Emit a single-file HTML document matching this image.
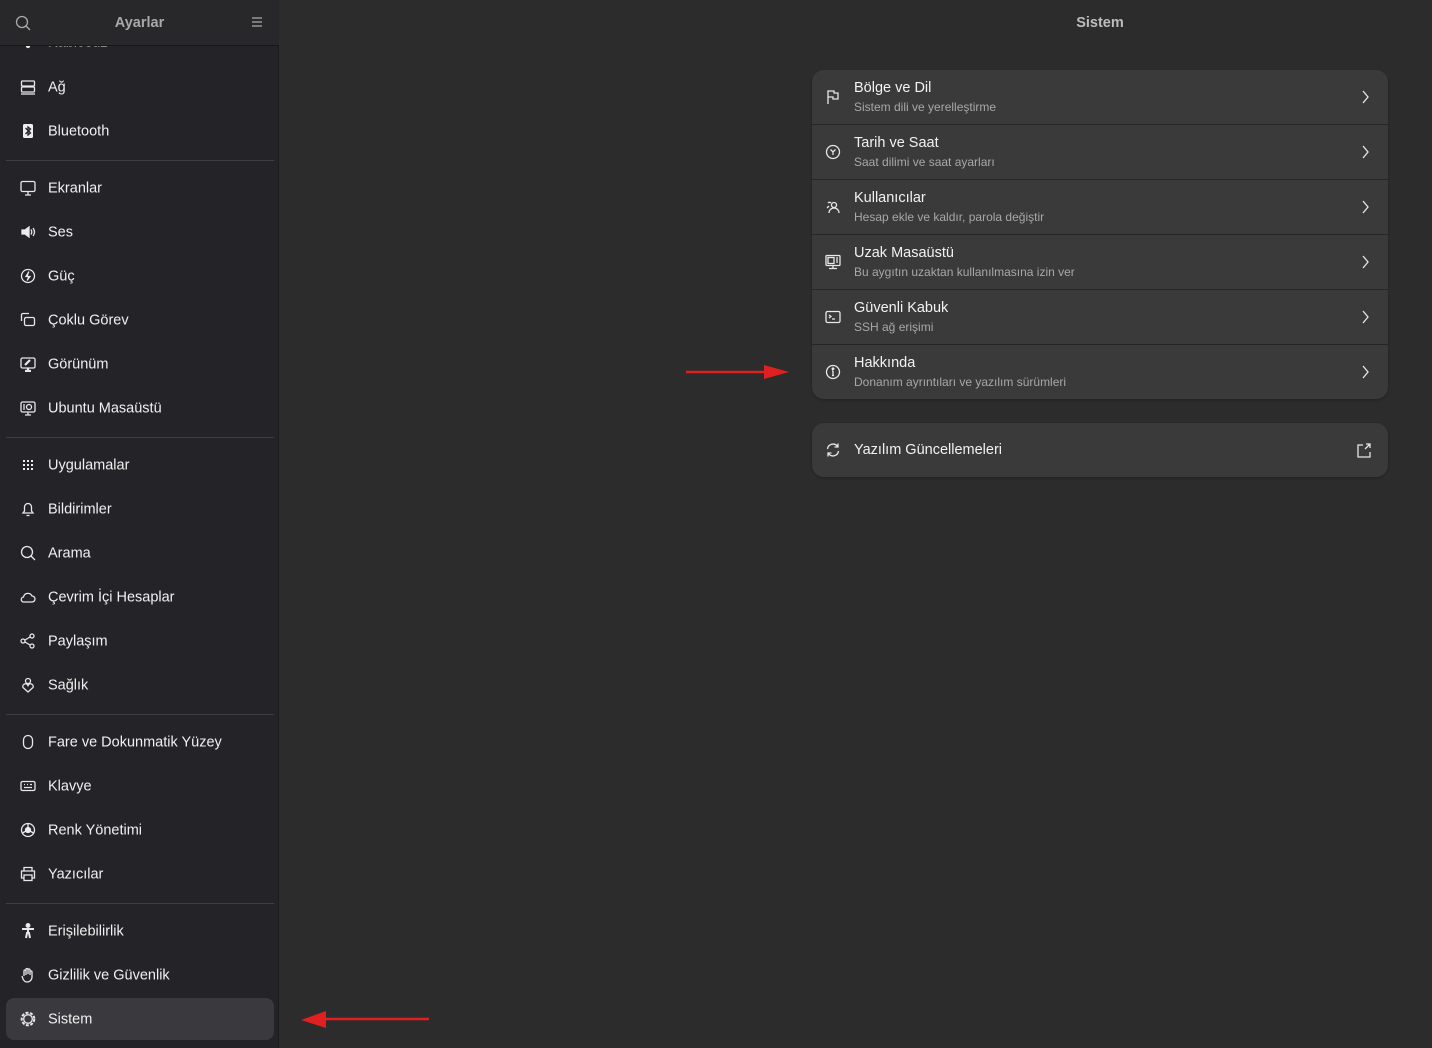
<!DOCTYPE html>
<html><head><meta charset="utf-8"><style>
*{margin:0;padding:0;box-sizing:border-box}
body{width:1432px;height:1048px;background:#2c2c2c;font-family:"Liberation Sans",sans-serif;color:#fff;position:relative;overflow:hidden}
#side{position:absolute;left:0;top:0;width:279px;height:1048px;background:#242428;border-right:1px solid #1b1b1d}
#sh{position:absolute;left:0;top:0;width:279px;height:46px;background:#28282b;border-bottom:1px solid #17171a;z-index:2}
.it{position:absolute;left:6px;width:268px;height:42px;font-size:14.5px;color:#f0f0f0}
.it span{position:absolute;left:42px;top:50%;transform:translateY(-48%)}
.it svg{position:absolute;left:14px;top:13px;width:16px;height:16px}
.sep{position:absolute;left:6px;width:268px;height:1px;background:#3e3e42}
.card{position:absolute;left:812px;width:576px;background:#3a3a3a;border-radius:12px;overflow:hidden;box-shadow:0 1px 2px rgba(0,0,0,.25)}
.row{position:relative;height:55px;border-bottom:1px solid #262626}
.row:last-child{border-bottom:none}
.row .t{position:absolute;left:42px;top:10px;font-size:14.5px;color:#f2f2f2}
.row .s{position:absolute;left:42px;top:30px;font-size:12px;color:#a8a8a8}
.row svg.ic{position:absolute;left:13px;top:19px;width:16px;height:16px}
.row svg.ch{position:absolute;left:549px;top:19px;width:10px;height:16px}
svg{fill:none;stroke:#e8e8e8;stroke-width:1.3}
</style></head><body>
<div id="side">
<div id="sh">
<svg style="position:absolute;left:15px;top:15px;width:16px;height:16px;stroke:#aaa"><circle cx="7" cy="7" r="5.5"/><path d="M11 11l4 4"/></svg>
<div style="position:absolute;left:0;width:279px;top:15px;text-align:center;font-weight:bold;font-size:14.5px;color:#a9a9ab">Ayarlar</div>
<svg style="position:absolute;left:251px;top:16px;width:12px;height:12px;stroke:#aaa"><path d="M1 2h10M1 6h10M1 10h10"/></svg>
</div>
<div class="it" style="top:22px"><svg style="top:16px"><circle cx="8" cy="8" r="1.5" fill="#eee"/></svg><span style="top:20px">Kablosuz</span></div>
<div class="it" style="top:66px"><svg><rect x="1.5" y="2" width="13" height="5" rx="1"/><rect x="1.5" y="8" width="13" height="5" rx="1"/><path d="M1 15h14"/></svg><span>Ağ</span></div>
<div class="it" style="top:110px"><svg><rect x="3" y="1" width="10" height="14" rx="1.5" fill="#eee" stroke="none"/><path d="M5.5 5l5 5-2.5 2V4l2.5 2-5 5" stroke="#242428"/></svg><span>Bluetooth</span></div>
<div class="sep" style="top:160px"></div>
<div class="it" style="top:167px"><svg><rect x="1" y="1.5" width="14" height="10" rx="1.5"/><path d="M5 15h6M8 12v3"/></svg><span>Ekranlar</span></div>
<div class="it" style="top:211px"><svg><path d="M2 6h3l4-3v10l-4-3H2z" fill="#eee"/><path d="M11 5.5q1.5 2.5 0 5M13 4q3 4 0 8"/></svg><span>Ses</span></div>
<div class="it" style="top:255px"><svg><circle cx="8" cy="8" r="6.5"/><path d="M9 3.5L6 8.5h4L7 12.5" fill="#eee"/></svg><span>Güç</span></div>
<div class="it" style="top:299px"><svg><path d="M1.5 9V3a1.5 1.5 0 011.5-1.5h6"/><rect x="4.5" y="5.5" width="10" height="8" rx="1.5"/></svg><span>Çoklu Görev</span></div>
<div class="it" style="top:343px"><svg><rect x="1" y="2" width="14" height="10" rx="1.5"/><path d="M5 15h6M8 12v3M5 9l5-5" stroke-width="2.2"/></svg><span>Görünüm</span></div>
<div class="it" style="top:387px"><svg><rect x="1" y="2" width="14" height="10" rx="1.5"/><circle cx="9" cy="7" r="2.5"/><path d="M3 5h2M3 7h2M3 9h2M5 15h6M8 12v3"/></svg><span>Ubuntu Masaüstü</span></div>
<div class="sep" style="top:437px"></div>
<div class="it" style="top:444px"><svg><g fill="#eee" stroke="none"><rect x="3" y="3" width="2" height="2"/><rect x="7" y="3" width="2" height="2"/><rect x="11" y="3" width="2" height="2"/><rect x="3" y="7" width="2" height="2"/><rect x="7" y="7" width="2" height="2"/><rect x="11" y="7" width="2" height="2"/><rect x="3" y="11" width="2" height="2"/><rect x="7" y="11" width="2" height="2"/><rect x="11" y="11" width="2" height="2"/></g></svg><span>Uygulamalar</span></div>
<div class="it" style="top:488px"><svg><path d="M3 12h10l-1.5-2V6a3.5 3.5 0 00-7 0v4zM6.5 14.5h3"/></svg><span>Bildirimler</span></div>
<div class="it" style="top:532px"><svg><circle cx="7" cy="7" r="5.5"/><path d="M11 11l4 4"/></svg><span>Arama</span></div>
<div class="it" style="top:576px"><svg><path d="M4 13h8a3 3 0 000-6 4.5 4.5 0 00-8.5 1A2.5 2.5 0 004 13z"/></svg><span>Çevrim İçi Hesaplar</span></div>
<div class="it" style="top:620px"><svg><circle cx="3" cy="8" r="2"/><circle cx="12" cy="3" r="2"/><circle cx="12" cy="13" r="2"/><path d="M5 7l5-3M5 9l5 3"/></svg><span>Paylaşım</span></div>
<div class="it" style="top:664px"><svg><circle cx="8" cy="4" r="2.5"/><path d="M8 15l-5-4.5a2.5 2.5 0 015-2 2.5 2.5 0 015 2z"/></svg><span>Sağlık</span></div>
<div class="sep" style="top:714px"></div>
<div class="it" style="top:721px"><svg><rect x="3.5" y="1.5" width="9" height="13" rx="4.5"/></svg><span>Fare ve Dokunmatik Yüzey</span></div>
<div class="it" style="top:765px"><svg><rect x="1" y="3.5" width="14" height="9" rx="1.5"/><path d="M4 6.5h1M7 6.5h1M10 6.5h2M4 9.5h8"/></svg><span>Klavye</span></div>
<div class="it" style="top:809px"><svg><circle cx="8" cy="8" r="6.5"/><circle cx="8" cy="8" r="2.5" fill="#eee"/><path d="M8 1.5v4M2.5 11l3.5-2M13.5 11l-3.5-2"/></svg><span>Renk Yönetimi</span></div>
<div class="it" style="top:853px"><svg><path d="M4 5V1.5h8V5M4 12H1.5V5h13v7H12"/><rect x="4" y="9" width="8" height="5.5"/></svg><span>Yazıcılar</span></div>
<div class="sep" style="top:903px"></div>
<div class="it" style="top:910px"><svg><circle cx="8" cy="2.5" r="1.8" fill="#eee"/><path d="M2 6h12M8 6v5M6 15l1-5h2l1 5" stroke-width="2"/></svg><span>Erişilebilirlik</span></div>
<div class="it" style="top:954px"><svg><path d="M4 9V4a1 1 0 012 0V8M6 7V2.5a1 1 0 012 0V7M8 7V3a1 1 0 012 0V8M10 8V5a1 1 0 012 0v5a5 5 0 01-5 5c-2 0-3-1-4-3l-1-3"/></svg><span>Gizlilik ve Güvenlik</span></div>
<div class="it" style="top:998px;background:#3a3a3e;border-radius:8px"><svg><circle cx="8" cy="8" r="6.3" stroke-width="2" stroke-dasharray="3 1.5"/><circle cx="8" cy="8" r="4.3"/></svg><span>Sistem</span></div>
</div>
<div style="position:absolute;left:1000px;width:200px;top:15px;text-align:center;font-weight:bold;font-size:14.5px;color:#bdbdbd">Sistem</div>
<div class="card" style="top:70px;height:329px">
<div class="row"><svg class="ic"><path d="M3 15V2h6v2h4v6H8V8H3"/></svg><div class="t">Bölge ve Dil</div><div class="s">Sistem dili ve yerelleştirme</div><svg class="ch"><path d="M2 2l5 6-5 6"/></svg></div>
<div class="row"><svg class="ic"><circle cx="8" cy="8" r="6.5"/><path d="M5.5 5.5L8 8l2.5-2.5M8 8v3"/></svg><div class="t">Tarih ve Saat</div><div class="s">Saat dilimi ve saat ayarları</div><svg class="ch"><path d="M2 2l5 6-5 6"/></svg></div>
<div class="row"><svg class="ic"><circle cx="9" cy="6" r="2.5"/><path d="M4 14a5 5 0 0110 0M3 4a2 2 0 013 0M2 9l2-2"/></svg><div class="t">Kullanıcılar</div><div class="s">Hesap ekle ve kaldır, parola değiştir</div><svg class="ch"><path d="M2 2l5 6-5 6"/></svg></div>
<div class="row"><svg class="ic"><rect x="1" y="1.5" width="14" height="10" rx="1"/><rect x="3" y="3.5" width="6" height="6"/><path d="M11 4h2M11 6h2M11 8h2M4 14.5h8M8 11.5v3"/></svg><div class="t">Uzak Masaüstü</div><div class="s">Bu aygıtın uzaktan kullanılmasına izin ver</div><svg class="ch"><path d="M2 2l5 6-5 6"/></svg></div>
<div class="row"><svg class="ic"><rect x="1" y="2.5" width="14" height="11" rx="1.5"/><path d="M4 6l2 1.5L4 9M7 10h3"/></svg><div class="t">Güvenli Kabuk</div><div class="s">SSH ağ erişimi</div><svg class="ch"><path d="M2 2l5 6-5 6"/></svg></div>
<div class="row"><svg class="ic"><circle cx="8" cy="8" r="6.5"/><path d="M8 7v4.5M7 7h1M7 11.5h2"/><circle cx="8" cy="4.8" r=".8" fill="#eee"/></svg><div class="t">Hakkında</div><div class="s">Donanım ayrıntıları ve yazılım sürümleri</div><svg class="ch"><path d="M2 2l5 6-5 6"/></svg></div>
</div>
<div class="card" style="top:423px;height:54px">
<div class="row" style="height:54px"><svg class="ic" style="top:19px"><path d="M2.5 7a5.5 5.5 0 0110-2.5M13.5 9a5.5 5.5 0 01-10 2.5"/><path d="M13 1.5V5H9.5M3 14.5V11h3.5"/></svg><div class="t" style="top:19px">Yazılım Güncellemeleri</div><svg class="ch" style="left:544px;top:19px;width:16px"><path d="M7 3H2v12h12v-5M9 7l5-5M10 2h4v4"/></svg></div>
</div>
<svg style="position:absolute;left:684px;top:362px;width:110px;height:20px;stroke:#e02020;fill:#e02020"><path d="M2 10h80" stroke-width="2.5"/><path d="M80 3l25 7-25 7z" stroke="none"/></svg>
<svg style="position:absolute;left:298px;top:1009px;width:134px;height:20px;stroke:#e02020;fill:#e02020"><path d="M25 10h106" stroke-width="2.5"/><path d="M28 2L3 11l25 8z" stroke="none"/></svg>
</body></html>
